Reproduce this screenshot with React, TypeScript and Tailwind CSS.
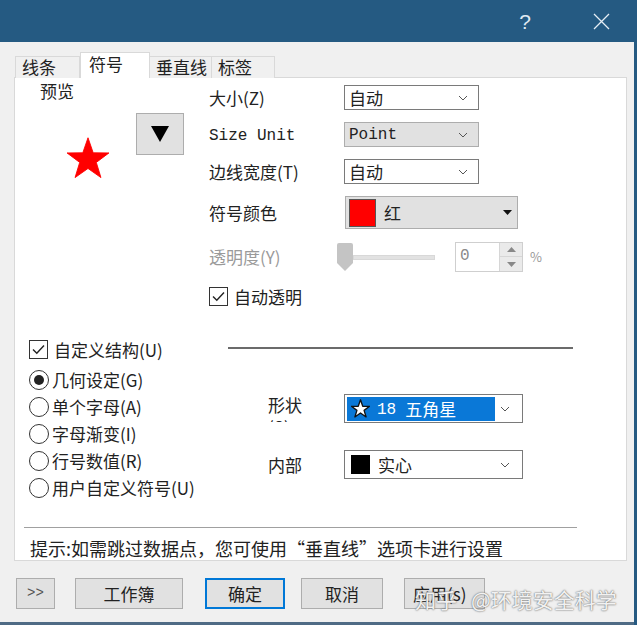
import { ReactNode } from 'react'

const cjk = { fontFamily: '"Noto Sans CJK SC", "Liberation Sans", sans-serif' }
const mono = { fontFamily: '"Liberation Mono", "Noto Sans CJK SC", monospace' }

function Chevron() {
  return (
    <svg width="10" height="6" viewBox="0 0 10 6" className="shrink-0">
      <path d="M1 1 L5 5 L9 1" fill="none" stroke="#555" strokeWidth="1" />
    </svg>
  )
}

function Select({ children, gray, width = 'w-[135px]' }: { children: ReactNode; gray?: boolean; width?: string }) {
  return (
    <div
      className={`${width} h-[25px] flex items-center justify-between pl-[4px] pr-[10px] border border-[#7a7a7a] ${
        gray ? 'bg-[#e1e1e1] border-[#adadad]' : 'bg-white'
      }`}
    >
      <div className="flex items-center">{children}</div>
      <Chevron />
    </div>
  )
}

function Check({ label }: { label: string }) {
  return (
    <div className="flex items-center h-[19px]">
      <div className="w-[19px] h-[19px] border border-[#333] bg-white flex items-center justify-center">
        <svg width="13" height="11" viewBox="0 0 13 11">
          <path d="M1 5.5 L4.8 9.2 L12 1.5" fill="none" stroke="#222" strokeWidth="1.4" />
        </svg>
      </div>
      <span className="ml-[6px] text-[17px] leading-[20px] text-[#222]">{label}</span>
    </div>
  )
}

function Radio({ label, on }: { label: string; on?: boolean }) {
  return (
    <div className="h-[27px] flex items-center">
      <div className="w-[20px] h-[20px] rounded-full border-[1.5px] border-[#333] bg-white flex items-center justify-center">
        {on && <div className="w-[10px] h-[10px] rounded-full bg-[#222]" />}
      </div>
      <span className="ml-[3px] text-[17px] leading-[20px] text-[#222]">{label}</span>
    </div>
  )
}

function Star({ size, fill, stroke }: { size: number; fill: string; stroke?: string }) {
  return (
    <svg width={size} height={size} viewBox="0 0 100 100">
      <path
        d="M50 4 L61.8 38.2 L97.6 38.5 L68.9 60 L79.4 94.5 L50 73.8 L20.6 94.5 L31.1 60 L2.4 38.5 L38.2 38.2 Z"
        fill={fill}
        stroke={stroke ?? fill}
        strokeWidth={stroke ? 7 : 2}
        strokeLinejoin="round"
      />
    </svg>
  )
}

const tabs = [
  { name: '线条', w: 'w-[65px]' },
  { name: '符号', w: 'w-[70px]', active: true },
  { name: '垂直线', w: 'w-[63px]' },
  { name: '标签', w: 'w-[64px]' },
]

export default function App() {
  return (
    <div className="relative w-[637px] h-[625px] flex flex-col bg-[#f0f0f0] text-[#222] overflow-hidden" style={cjk}>
      {/* title bar */}
      <div className="h-[42px] bg-[#255a82] flex items-center justify-end shrink-0">
        <span className="text-[21px] font-light text-[#dfe8f1] mr-[62px] leading-none" style={{ fontFamily: '"Liberation Sans", sans-serif' }}>
          ?
        </span>
        <svg width="17" height="17" viewBox="0 0 17 17" className="mr-[27px]">
          <path d="M1 1 L16 16 M16 1 L1 16" stroke="#e6eef5" strokeWidth="1.3" />
        </svg>
      </div>

      <div className="flex-1 flex flex-col border-r-[3px] border-[#255a82]">
        {/* tabs */}
        <div className="flex items-end ml-[15px] mt-[10px] h-[26px] relative z-10">
          {tabs.map((t) =>
            t.active ? (
              <div
                key={t.name}
                className={`${t.w} h-[26px] bg-white border border-b-0 border-[#d9d9d9] pl-[8px] text-[17px] leading-[22px]`}
              >
                {t.name}
              </div>
            ) : (
              <div
                key={t.name}
                className={`${t.w} h-[22px] bg-[#f0f0f0] border border-b-0 border-[#d9d9d9] -ml-px first:ml-0 pl-[6px] text-[17px] leading-[19px]`}
              >
                {t.name}
              </div>
            )
          )}
        </div>

        {/* panel */}
        <div className="ml-[14px] w-[613px] h-[484px] -mt-px bg-white border border-[#d9d9d9] flex flex-col overflow-hidden">
          <div className="flex">
            {/* preview */}
            <div className="w-[194px] flex flex-col">
              <div className="pl-[25px] mt-[3px] text-[17px] leading-[20px]">预览</div>
              <div className="flex items-start mt-[12px]">
                <div className="ml-[51px] mt-[23px]">
                  <Star size={44} fill="#ff0000" />
                </div>
                <div className="ml-[26px] w-[48px] h-[42px] bg-[#e1e1e1] border border-[#adadad] flex items-center justify-center">
                  <svg width="18" height="16" viewBox="0 0 18 16">
                    <path d="M0 0 H18 L9 16 Z" fill="#000" />
                  </svg>
                </div>
              </div>
            </div>

            {/* properties */}
            <div className="flex flex-col pt-[7px]">
              <div className="flex items-center h-[25px]">
                <div className="w-[135px] text-[17px]">大小(Z)</div>
                <Select>
                  <span className="text-[17px] leading-[20px]">自动</span>
                </Select>
              </div>
              <div className="flex items-center h-[25px] mt-[12px]">
                <div className="w-[135px] text-[16px] leading-[20px] pt-[2px]" style={mono}>Size Unit</div>
                <Select gray>
                  <span className="text-[16px] leading-[20px] pt-[1px]" style={mono}>Point</span>
                </Select>
              </div>
              <div className="flex items-center h-[25px] mt-[12px]">
                <div className="w-[135px] text-[17px]">边线宽度(T)</div>
                <Select>
                  <span className="text-[17px] leading-[20px]">自动</span>
                </Select>
              </div>
              <div className="flex items-center h-[33px] mt-[12px]">
                <div className="w-[136px] text-[17px]">符号颜色</div>
                <div className="w-[173px] h-[33px] bg-[#e1e1e1] border border-[#adadad] flex items-center pl-[3px] pr-[5px]">
                  <div className="w-[27px] h-[28px] bg-[#ff0000] border border-[#555]" />
                  <span className="ml-[8px] text-[17px] flex-1">红</span>
                  <svg width="9" height="5" viewBox="0 0 9 5">
                    <path d="M0 0 H9 L4.5 5 Z" fill="#111" />
                  </svg>
                </div>
              </div>
              <div className="flex items-center h-[30px] mt-[13px]">
                <div className="w-[128px] text-[17px] text-[#9a9a9a]">透明度(Y)</div>
                <div className="flex items-center w-[118px]">
                  <svg width="16" height="28" viewBox="0 0 16 28">
                    <path d="M0 2 Q0 0 2 0 H14 Q16 0 16 2 V20 L8 28 L0 20 Z" fill="#c4c4c4" />
                  </svg>
                  <div className="w-[82px] h-[5px] bg-[#e2e2e2] border border-[#d8d8d8]" />
                </div>
                <div className="w-[68px] h-[30px] border border-[#cfcfcf] flex">
                  <div className="flex-1 pl-[4px] text-[16px] leading-[26px] text-[#8a8a8a]" style={mono}>0</div>
                  <div className="w-[23px] bg-[#eaeaea] border-l border-[#d6d6d6] flex flex-col items-center justify-around py-[2px]">
                    <svg width="9" height="5" viewBox="0 0 9 5"><path d="M4.5 0 L9 5 H0 Z" fill="#888" /></svg>
                    <div className="w-full h-px bg-[#d6d6d6]" />
                    <svg width="9" height="5" viewBox="0 0 9 5"><path d="M0 0 H9 L4.5 5 Z" fill="#888" /></svg>
                  </div>
                </div>
                <span className="ml-[7px] text-[13px] text-[#999]">%</span>
              </div>
              <div className="mt-[15px]">
                <Check label="自动透明" />
              </div>
            </div>
          </div>

          {/* custom structure */}
          <div className="flex mt-[34px]">
            <div className="w-[213px] pl-[14px]">
              <Check label="自定义结构(U)" />
            </div>
            <div className="w-[345px] h-[2px] bg-[#6b6b6b] mt-[7px]" />
          </div>

          <div className="flex mt-[7px]">
            <div className="w-[253px] pl-[14px] flex flex-col">
              <Radio label="几何设定(G)" on />
              <Radio label="单个字母(A)" />
              <Radio label="字母渐变(I)" />
              <Radio label="行号数值(R)" />
              <Radio label="用户自定义符号(U)" />
            </div>
            <div className="flex flex-col pt-[28px]">
              <div className="flex items-start">
                <div className="w-[76px] h-[28px] overflow-hidden text-[17px] leading-[22px]">
                  形状
                  <br />
                  (S)
                </div>
                <div className="w-[179px] h-[29px] border border-[#7a7a7a] bg-white flex items-center pl-[2px] pr-[12px]">
                  <div className="w-[148px] h-[24px] bg-[#0a78d7] flex items-center pl-[4px] text-white">
                    <Star size={19} fill="#fff" stroke="#111" />
                    <span className="ml-[7px] text-[16px] leading-[20px] pt-[2px]" style={mono}>18</span>
                    <span className="ml-[9px] text-[17px] leading-[20px]">五角星</span>
                  </div>
                  <div className="flex-1" />
                  <Chevron />
                </div>
              </div>
              <div className="flex items-center mt-[27px]">
                <div className="w-[76px] text-[17px]">内部</div>
                <div className="w-[179px] h-[29px] border border-[#7a7a7a] bg-white flex items-center pl-[6px] pr-[12px]">
                  <div className="w-[19px] h-[19px] bg-black" />
                  <span className="ml-[8px] text-[17px] flex-1">实心</span>
                  <Chevron />
                </div>
              </div>
            </div>
          </div>

          <div className="ml-[9px] w-[553px] h-px bg-[#a0a0a0] mt-[26px]" />
          <div className="pl-[15px] mt-[10px] text-[18px] leading-[20px]">
            提示:如需跳过数据点，您可使用“垂直线”选项卡进行设置
          </div>
        </div>

        {/* buttons */}
        <div className="flex items-center mt-[17px] h-[31px]">
          <div className="ml-[16px] w-[39px] h-[31px] bg-[#e1e1e1] border border-[#adadad] flex items-center justify-center text-[14px] text-[#555]" style={mono}>
            &gt;&gt;
          </div>
          <div className="ml-[20px] w-[108px] h-[31px] bg-[#e1e1e1] border border-[#adadad] flex items-center justify-center text-[17px]">工作簿</div>
          <div className="ml-[22px] w-[80px] h-[31px] bg-[#e1e1e1] border-2 border-[#0078d7] flex items-center justify-center text-[17px]">确定</div>
          <div className="ml-[16px] w-[82px] h-[31px] bg-[#e1e1e1] border border-[#adadad] flex items-center justify-center text-[17px]">取消</div>
          <div className="ml-[21px] w-[81px] h-[31px] bg-[#e1e1e1] border border-[#adadad] flex items-center pl-[8px] text-[17px]">应用(s)</div>
        </div>
        <div className="flex-1" />
        <div className="h-[3px] bg-[#4f6b85]" />
      </div>

      {/* watermark */}
      <div
        className="absolute left-[415px] top-[586px] flex items-center text-[21px] leading-[26px] text-white/90"
        style={{ textShadow: '0 0 2px #666, 0 0 1px #888' }}
      >
        <span>知乎</span>
        <span className="ml-[14px]">@环境安全科学</span>
      </div>
    </div>
  )
}
